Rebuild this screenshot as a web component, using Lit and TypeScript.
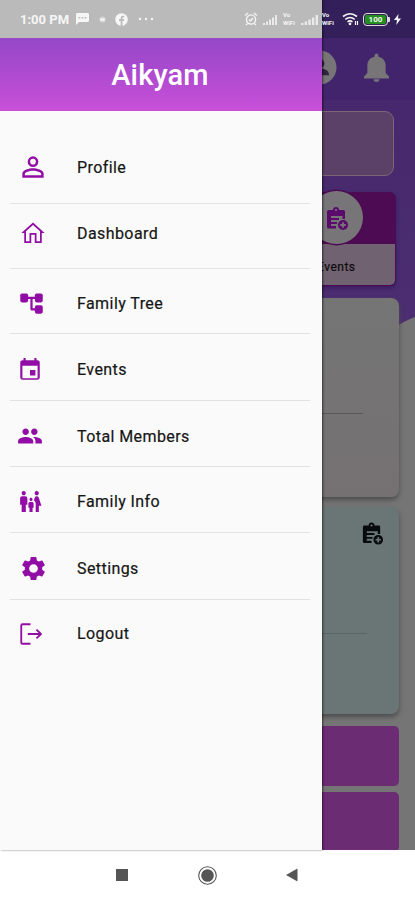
import { LitElement, html, svg, css } from "lit";
import { customElement } from "lit/decorators.js";
import { styleMap } from "lit/directives/style-map.js";

const PERSON = svg`<path d="M12 5.9a2.1 2.1 0 1 1 0 4.2 2.1 2.1 0 0 1 0-4.2m0 9c2.97 0 6.1 1.46 6.1 2.1v1.1H5.9V17c0-.64 3.13-2.1 6.1-2.1M12 4a4 4 0 0 0 0 8 4 4 0 0 0 0-8m0 9c-2.67 0-8 1.34-8 4v3h16v-3c0-2.66-5.33-4-8-4z"/>`;
const HOME = svg`<path d="M12 5.1l6 5.400V19h-3v-7H9v7H6v-8.500l6-5.400M12 3L2 12h2.500v8.500h6v-7h3v7h6V12H22L12 3z"/>`;
const TREE = svg`<rect x="2" y="3" width="7" height="8" rx="1.6"/><rect x="15" y="3" width="7" height="8" rx="1.6"/><rect x="15" y="13.5" width="7" height="7.5" rx="1.6"/><path d="M8 6h8v2H8zM11 7h2v9.2h3v2h-3.6A1.4 1.4 0 0 1 11 16.8z"/>`;
const EVENT = svg`<path d="M17 12h-5v5h5v-5zM16 1v2H8V1H6v2H5c-1.11 0-1.99.9-1.99 2L3 19c0 1.1.89 2 2 2h14c1.1 0 2-.9 2-2V5c0-1.1-.9-2-2-2h-1V1h-2zm3 18.6H5V8h14v11.6z"/>`;
const PEOPLE = svg`<path d="M16 11c1.66 0 2.99-1.34 2.99-3S17.66 5 16 5s-3 1.34-3 3 1.34 3 3 3zm-8 0c1.66 0 2.99-1.34 2.99-3S9.66 5 8 5 5 6.34 5 8s1.34 3 3 3zm0 2c-2.33 0-7 1.17-7 3.5V19h14v-2.5c0-2.33-4.67-3.5-7-3.5zm8 0c-.29 0-.62.02-.97.05 1.16.84 1.97 1.97 1.97 3.45V19h6v-2.5c0-2.33-4.67-3.5-7-3.5z"/>`;
const FAMILY = svg`<path d="M16 4c0-1.11.89-2 2-2s2 .89 2 2-.89 2-2 2-2-.89-2-2zm4 18v-6h2.5l-2.54-7.63A2.01 2.01 0 0 0 18.06 7h-.12a2 2 0 0 0-1.9 1.37l-.86 2.58c1.08.6 1.82 1.73 1.82 3.05v8h3zm-7.5-10.500c.83 0 1.500-.67 1.500-1.500s-.67-1.500-1.500-1.500S11 9.170 11 10s.67 1.500 1.500 1.500zM5.500 6c1.110 0 2-.89 2-2s-.89-2-2-2-2 .89-2 2 .89 2 2 2zm2 16v-7H9V9c0-1.100-.9-2-2-2H4c-1.100 0-2 .9-2 2v6h1.500v7h4zm6.500 0v-4h1v-4c0-.82-.68-1.500-1.500-1.500h-2c-.82 0-1.500.68-1.500 1.500v4h1v4h3z"/>`;
const GEAR = svg`<path d="M19.14 12.94c.04-.3.06-.61.06-.94 0-.32-.02-.64-.07-.94l2.03-1.58c.18-.14.23-.41.12-.61l-1.920-3.320c-.12-.22-.37-.29-.59-.22l-2.390.96c-.5-.38-1.030-.7-1.620-.94L14.400 2.810c-.04-.24-.24-.41-.48-.41h-3.840c-.24 0-.43.17-.47.41L9.250 5.350c-.59.24-1.130.57-1.620.94l-2.390-.96c-.22-.08-.47 0-.59.22L2.740 8.870c-.12.21-.08.47.12.61l2.030 1.580c-.05.3-.09.63-.09.94s.02.64.07.94l-2.030 1.580c-.18.14-.23.41-.12.61l1.920 3.320c.12.22.37.29.59.22l2.390-.96c.5.38 1.030.7 1.620.94l.36 2.540c.05.24.24.41.48.41h3.840c.24 0 .44-.17.47-.41l.36-2.540c.59-.24 1.130-.56 1.620-.94l2.390.96c.22.08.47 0 .59-.22l1.920-3.320c.12-.22.07-.47-.12-.61l-2.010-1.580zM12 15.600a3.600 3.600 0 1 1 0-7.200 3.600 3.600 0 0 1 0 7.200z"/>`;
const LOGOUT = svg`<path fill="none" stroke="currentColor" stroke-width="1.7" stroke-linejoin="round" d="M11.500 3H4.200Q3 3 3 4.200v15.600Q3 21 4.200 21h7.300M9 12h12M17 8l4.200 4-4.200 4"/>`;

// gap: distance from the row's centre line to the divider under it
const ITEMS = [
  { label: "Profile", icon: PERSON, size: 32, cx: 33, height: 92.5, gap: 35.5 },
  { label: "Dashboard", icon: HOME, size: 28, cx: 33, height: 65, gap: 34.5 },
  { label: "Family Tree", icon: TREE, size: 27, cx: 31, height: 65.5, gap: 29.5 },
  { label: "Events", icon: EVENT, size: 26, cx: 30, height: 67, gap: 30.5 },
  { label: "Total Members", icon: PEOPLE, size: 26, cx: 30, height: 66, gap: 30 },
  { label: "Family Info", icon: FAMILY, size: 25, cx: 30, height: 66, gap: 31 },
  { label: "Settings", icon: GEAR, size: 29, cx: 33, height: 67, gap: 31 },
  { label: "Logout", icon: LOGOUT, size: 26, cx: 30.5, height: 65, gap: 30.5 },
];

const assignment = html`<svg class="task" viewBox="0 0 24 24" fill="currentColor">
  <path fill-rule="evenodd" d="M3.500 3H8a3 3 0 0 1 6 0h4.500q1.500 0 1.500 1.500V12h-2.500V9H6v2h8v2H6v2h6v2H6v2h5v2.500H3.500Q2 21.500 2 20V4.500Q2 3 3.500 3zM11 2a1.100 1.100 0 1 0 0 2.200A1.100 1.100 0 0 0 11 2z"/>
  <path fill-rule="evenodd" d="M18 13a5 5 0 1 1 0 10 5 5 0 0 1 0-10zm-.9 2.200v1.900h-1.900v1.800h1.900v1.900h1.800v-1.900h1.900v-1.800h-1.900v-1.900z"/>
</svg>`;

@customElement("home-screen")
class HomeScreen extends LitElement {
  static styles = css`
    :host { display: block; height: 850px; position: relative; overflow: hidden; background: #757575; font-family: Roboto, sans-serif; }
    .backdrop { position: absolute; inset: 0; width: 415px; height: 340px; }
    .page { position: relative; display: flex; flex-direction: column; align-items: flex-end; }
    .appbar { box-sizing: border-box; width: 100%; height: 100px; padding: 38px 26px 0 0; display: flex; justify-content: flex-end; align-items: center; gap: 27px; color: #777578; }
    .avatar { width: 35px; height: 35px; margin-bottom: 3px; }
    .bell { width: 25px; height: 29px; margin-bottom: 3px; }
    .banner { box-sizing: border-box; width: 380px; height: 65px; margin: 11px 21px 0 0; border: 1.500px solid #7b6673; border-radius: 9px; background: #5b4167; }
    .event { box-sizing: border-box; width: 118px; height: 94px; margin: 16px 19px 0 0; border: 1.500px solid #4c0b52; border-radius: 6px; background: #4c0b52; box-shadow: 0 2px 4px #3a1c5e; display: flex; flex-direction: column; position: relative; }
    .event-label { margin-top: auto; height: 41px; border-radius: 0 0 5px 5px; background: #706271; color: #0c0a0c; font-size: 12px; line-height: 46px; letter-spacing: .5px; padding-left: 38px; -webkit-text-stroke: .2px #0c0a0c; }
    .disc { position: absolute; left: 31px; top: -2px; width: 53px; height: 53px; border-radius: 50%; background: #777577; color: #5a0a6b; display: grid; place-items: center; box-shadow: 0 0 0 1.500px #4c0b52; }
    .disc .task { width: 24px; height: 24px; margin-top: 2px; }
    .card { box-sizing: border-box; width: 383px; margin-right: 16px; border-radius: 8px; background: #757273; box-shadow: 0 3px 5px #4d4d4d; display: flex; flex-direction: column; }
    .plain { height: 199px; margin-top: 12px; padding: 115px 36px 0 30px; background: linear-gradient(#757575, #757172); }
    .teal { height: 207px; margin-top: 10px; padding: 15px 15px 0 30px; background: #697675; }
    .teal .task { width: 23px; height: 24px; align-self: flex-end; color: #080b0b; }
    .rule { height: 1px; background: #5b5859; }
    .teal .rule { margin: 87px 17px 0 0; background: #596463; }
    .strip { width: 383px; height: 60px; margin: 12px 16px 0 0; border-radius: 5px; background: #6c2c74; }
    .strip + .strip { margin-top: 6px; }
  `;
  render() {
    return html`
      <svg class="backdrop" viewBox="0 0 415 340">
        <defs><linearGradient id="g" x2="0" y2="1"><stop offset="0" stop-color="#44256c"/><stop offset="1" stop-color="#4c2e71"/></linearGradient></defs>
        <path fill="url(#g)" d="M0 0H415V317Q404 321 396 327V340H0z"/>
        <path fill="#33205a" d="M0 0h415v38H0z"/>
        <path fill="#42246d" d="M0 38h415v62H0z"/>
      </svg>
      <div class="page">
        <div class="appbar">
          <svg class="avatar" viewBox="0 0 36 36"><circle cx="18" cy="18" r="17.500" fill="currentColor"/><circle cx="18" cy="14" r="5" fill="#302340"/><path d="M8 26q0-7 10-7t10 7z" fill="#302340"/></svg>
          <svg class="bell" viewBox="2 1 26 32" preserveAspectRatio="none" fill="currentColor"><path d="M13 5V3.500a2 2 0 0 1 4 0V5c5 1 7.500 5 7.500 10v8l3.500 4v2H2v-2l3.500-4v-8C5.500 10 8 6 13 5zM12 30h6a3 3 0 0 1-6 0z"/></svg>
        </div>
        <div class="banner"></div>
        <div class="event">
          <div class="disc">${assignment}</div>
          <div class="event-label">Events</div>
        </div>
        <div class="card plain"><div class="rule"></div></div>
        <div class="card teal">${assignment}<div class="rule"></div></div>
        <div class="strip"></div>
        <div class="strip"></div>
      </div>`;
  }
}

@customElement("side-drawer")
class SideDrawer extends LitElement {
  static styles = css`
    :host { display: flex; flex-direction: column; background: #fafafa; font-family: Roboto, sans-serif; box-shadow: 1px 0 2px rgba(0, 0, 0, .55); }
    .status-space { height: 38px; background: #bababa; flex: none; }
    .header { height: 73px; flex: none; display: flex; align-items: center; justify-content: center; background: linear-gradient(#9447c8, #c94fd8); color: #fff; font-size: 29px; font-weight: 500; letter-spacing: .15px; padding-right: 2px; box-sizing: border-box; }
    .row { box-sizing: border-box; display: flex; align-items: flex-end; margin: 0 12px 0 10px; border-bottom: 1px solid #e2e2e2; flex: none; }
    .row:last-child { border-bottom-color: transparent; }
    .content { display: flex; align-items: center; height: 0; }
    .slot { width: 67px; flex: none; color: #920da5; display: flex; }
    .slot svg { display: block; flex: none; }
    .label { font-size: 16px; color: #161616; letter-spacing: .42px; white-space: nowrap; -webkit-text-stroke: .2px #161616; }
  `;
  render() {
    return html`
      <div class="status-space"></div>
      <div class="header">Aikyam</div>
      ${ITEMS.map(
        (it) => html`<div class="row" style=${styleMap({ height: `${it.height}px`, paddingBottom: `${it.gap}px` })}>
          <div class="content">
            <div class="slot" style=${styleMap({ paddingLeft: `${it.cx - 10 - it.size / 2}px`, boxSizing: "border-box" })}>
              <svg width=${it.size} height=${it.size} viewBox="0 0 24 24" fill="currentColor">${it.icon}</svg>
            </div>
            <div class="label">${it.label}</div>
          </div>
        </div>`
      )}`;
  }
}

@customElement("status-bar")
class StatusBar extends LitElement {
  static styles = css`
    :host { display: flex; align-items: center; height: 38px; color: #f6f6f6; font-family: Roboto, sans-serif; box-sizing: border-box; padding: 0 14px 0 20px; }
    svg { display: block; flex: none; }
    .time { font-size: 13px; font-weight: 700; width: 56px; white-space: nowrap; }
    .chat { width: 13px; height: 12px; }
    .dot { width: 7px; height: 7px; margin-left: 10px; }
    .fb { width: 13px; height: 13px; margin-left: 9px; }
    .more { width: 16px; height: 4px; margin-left: 10px; }
    .alarm { width: 14px; height: 14px; margin-left: auto; }
    .sig { width: 14px; height: 10px; margin: 2px 0 0 5px; opacity: .8; }
    .sig.wide { width: 17px; margin-left: 3px; }
    .vo { width: 15px; margin-left: 6px; font-size: 6px; font-weight: 700; white-space: nowrap; display: flex; flex-direction: column; }
    .vo span { line-height: 8px; height: 8px; }
    .vo.second { margin-left: 4px; }
    .wifi { width: 17px; height: 14px; margin-left: 5px; }
    .battery { box-sizing: border-box; width: 25px; height: 13px; margin-left: 4px; border: 1.300px solid #ddd; border-radius: 4px; padding: 1px; display: flex; }
    .level { flex: 1; border-radius: 2px; background: #258f20; font-size: 8px; line-height: 9px; font-weight: 700; text-align: center; }
    .tip { width: 2px; height: 5px; background: #ddd; border-radius: 0 1px 1px 0; }
    .bolt { width: 7px; height: 11px; margin-left: 4px; }
  `;
  private signal(cls: string) {
    return html`<svg class="sig ${cls}" viewBox="0 0 14 10" preserveAspectRatio="none" fill="currentColor"><path d="M0 8h2v2H0zM3 6.500h2V10H3zM6 4.500h2V10H6zM9 2.500h2V10H9zM12 0h2v10h-2z"/></svg>`;
  }
  render() {
    return html`
      <span class="time">1:00 PM</span>
      <svg class="chat" viewBox="0 0 13 12"><path fill="currentColor" d="M1.500 0h10Q13 0 13 1.500v6Q13 9 11.500 9H3l-3 3V1.500Q0 0 1.500 0z"/><path fill="#bababa" d="M2.500 4h1.800v1.500H2.500zM5.600 4h1.800v1.500H5.600zM8.700 4h1.800v1.500H8.700z"/></svg>
      <svg class="dot" viewBox="0 0 8 8" fill="currentColor"><circle cx="4" cy="4" r="3.500" opacity=".45"/><path d="M1 4l2-2v1h2V2l2 2-2 2V5H3v1z"/></svg>
      <svg class="fb" viewBox="0 0 13 13"><circle cx="6.500" cy="6.500" r="6.300" fill="currentColor"/><path fill="#bababa" d="M5.700 13V8H4V6.300h1.700V5q0-2.300 2.300-2.300h1.300v1.600h-.9q-.9 0-.9.900v1.100h1.800L9 8H7.500v5z"/></svg>
      <svg class="more" viewBox="0 0 16 4" fill="currentColor"><circle cx="2" cy="2" r="1.200"/><circle cx="8" cy="2" r="1.200"/><circle cx="14" cy="2" r="1.200"/></svg>
      <svg class="alarm" viewBox="0 0 14 14" fill="none" stroke="currentColor" stroke-width="1.300"><circle cx="7" cy="7.500" r="4.600"/><path d="M1 3.500L4 1M13 3.500L10 1M5 7.500l1.500 1.500L9 6M3.500 11.500L2 13M10.500 11.500L12 13"/></svg>
      ${this.signal("")}
      <div class="vo"><span>Vo</span><span>WiFi</span></div>
      ${this.signal("wide")}
      <div class="vo second"><span>Vo</span><span>WiFi</span></div>
      <svg class="wifi" viewBox="0 0 17 14" fill="none" stroke="currentColor" stroke-width="1.600"><path d="M1 4.500q7-5.500 14 0M3.300 7.300q4.700-3.600 9.400 0M5.500 9.800q2.500-1.800 5 0"/><circle cx="8" cy="11.800" r=".6"/><path stroke-width="1.200" d="M13.500 9v4M15.500 9v4"/></svg>
      <div class="battery"><div class="level">100</div></div><div class="tip"></div>
      <svg class="bolt" viewBox="0 0 7 11" fill="currentColor"><path d="M4.500 0L0 6h3l-.7 5L7 4.500H4z"/></svg>`;
  }
}

@customElement("app-root")
class AppRoot extends LitElement {
  static styles = css`
    :host { display: flex; flex-direction: column; width: 415px; height: 900px; position: relative; overflow: hidden; background: #fff; }
    .drawer { position: absolute; left: 0; top: 0; width: 322px; height: 850px; }
    .status { position: absolute; left: 0; top: 0; width: 415px; }
    .nav { box-sizing: border-box; height: 50px; padding-right: 1px; background: #fff; display: flex; justify-content: center; align-items: center; color: #555; }
    .nav svg { width: 20px; height: 20px; margin: 0 32.500px; }
  `;
  render() {
    return html`
      <home-screen></home-screen>
      <side-drawer class="drawer"></side-drawer>
      <status-bar class="status"></status-bar>
      <div class="nav">
        <svg viewBox="0 0 20 20" fill="currentColor"><path d="M4 4h12v12H4z"/></svg>
        <svg viewBox="0 0 20 20"><circle cx="10.500" cy="10.500" r="8.800" fill="none" stroke="currentColor" stroke-width="1.100"/><circle cx="10.500" cy="10.500" r="6.300" fill="currentColor"/></svg>
        <svg viewBox="0 0 20 20" fill="currentColor"><path d="M4 10L15.500 3.500v13z"/></svg>
      </div>`;
  }
}
